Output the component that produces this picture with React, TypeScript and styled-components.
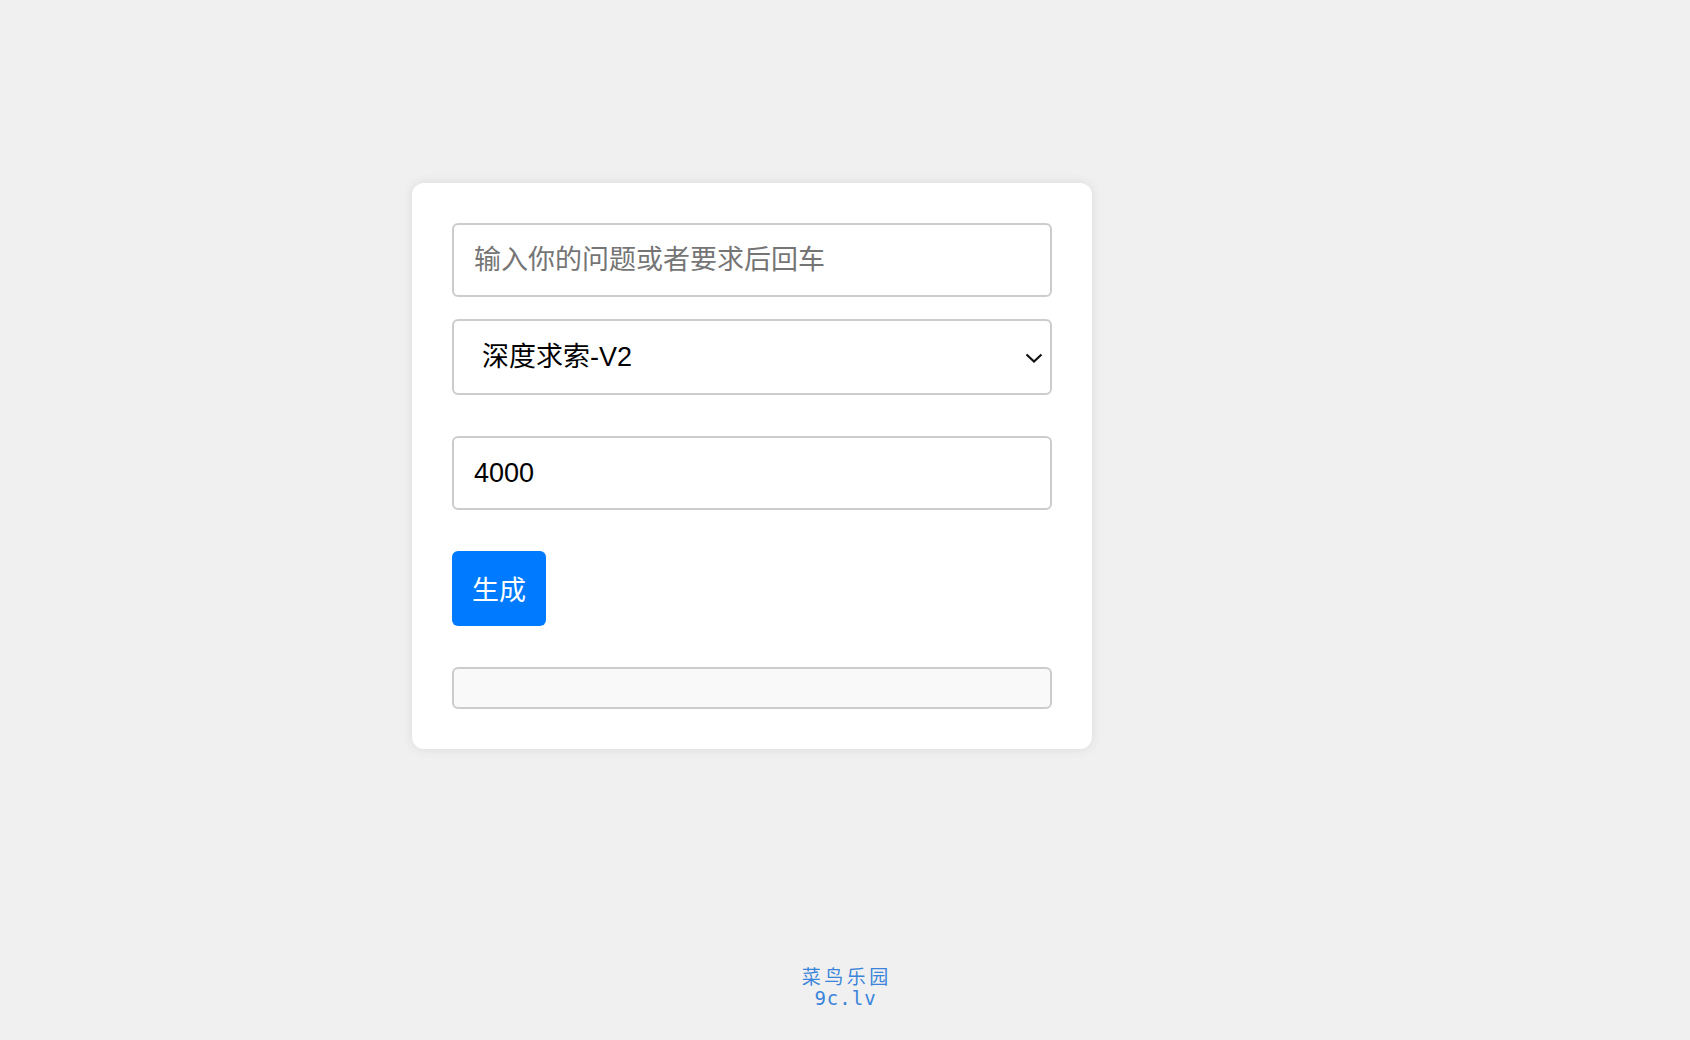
import React, { useState } from "react";
import styled, { createGlobalStyle } from "styled-components";

const GlobalStyle = createGlobalStyle`
  html, body {
    margin: 0;
    padding: 0;
    background: #f0f0f0;
  }
  body {
    font-family: "Liberation Sans", Arial, "Noto Sans CJK SC", sans-serif;
  }
  * { box-sizing: border-box; }
`;

const Page = styled.div`
  display: flex;
  flex-direction: column;
  min-height: 1040px;
`;

const Card = styled.div`
  width: 680px;
  margin: 183px 0 0 412px;
  padding: 40px;
  background: #ffffff;
  border-radius: 12px;
  box-shadow: 0 0 12px rgba(0, 0, 0, 0.09);
  display: flex;
  flex-direction: column;
  align-items: flex-start;
`;

const TextInput = styled.input<{ $gap?: number }>`
  width: 600px;
  height: 74px;
  margin-bottom: ${(p) => p.$gap ?? 0}px;
  padding: 0 20px;
  border: 2px solid #cccccc;
  border-radius: 6px;
  background: #ffffff;
  font-family: "Liberation Sans", Arial, "Noto Sans CJK SC", sans-serif;
  font-size: 27px;
  color: #000000;
  outline: none;
  &::placeholder {
    color: #757575;
  }
`;

const SelectWrap = styled.div`
  position: relative;
  width: 600px;
  height: 76px;
  margin-bottom: 41px;
`;

const Select = styled.select`
  appearance: none;
  -webkit-appearance: none;
  width: 100%;
  height: 100%;
  padding: 0 40px 0 28px;
  border: 2px solid #cccccc;
  border-radius: 6px;
  background: #ffffff;
  font-family: "Liberation Sans", Arial, "Noto Sans CJK SC", sans-serif;
  font-size: 27px;
  color: #000000;
  outline: none;
`;

const Chevron = styled.svg`
  position: absolute;
  right: 9px;
  top: 34px;
  width: 18px;
  height: 10px;
  pointer-events: none;
`;

const Button = styled.button`
  height: 75px;
  padding: 0 20px;
  margin-bottom: 41px;
  border: none;
  border-radius: 6px;
  background: #007bff;
  color: #ffffff;
  font-family: "Liberation Sans", Arial, "Noto Sans CJK SC", sans-serif;
  font-size: 27px;
  cursor: pointer;
`;

const Output = styled.div`
  width: 600px;
  height: 42px;
  border: 2px solid #cccccc;
  border-radius: 6px;
  background: #f9f9f9;
`;

const Footer = styled.footer`
  margin-top: 215px;
  display: flex;
  flex-direction: column;
  align-items: center;
  color: #3a84da;
`;

const FooterTitle = styled.div`
  font-family: "Noto Sans CJK SC", sans-serif;
  font-size: 19px;
  line-height: 24px;
  letter-spacing: 3.5px;
  padding-left: 3.5px;
  font-weight: 400;
`;

const FooterDomain = styled.div`
  font-family: "DejaVu Sans Mono", "Liberation Mono", monospace;
  font-size: 19px;
  line-height: 20px;
  letter-spacing: 1px;
  padding-left: 1px;
`;

export default function App() {
  const [model, setModel] = useState("deepseek-v2");
  return (
    <>
      <GlobalStyle />
      <Page>
        <Card>
          <TextInput type="text" placeholder="输入你的问题或者要求后回车" $gap={22} />
          <SelectWrap>
            <Select value={model} onChange={(e) => setModel(e.target.value)}>
              <option value="deepseek-v2">深度求索-V2</option>
            </Select>
            <Chevron viewBox="0 0 18 10">
              <path d="M1.5 1.5 L9 8.5 L16.5 1.5" fill="none" stroke="#111" strokeWidth="2.2" />
            </Chevron>
          </SelectWrap>
          <TextInput type="number" defaultValue="4000" $gap={41} />
          <Button>生成</Button>
          <Output />
        </Card>
        <Footer>
          <FooterTitle>菜鸟乐园</FooterTitle>
          <FooterDomain>9c.lv</FooterDomain>
        </Footer>
      </Page>
    </>
  );
}
